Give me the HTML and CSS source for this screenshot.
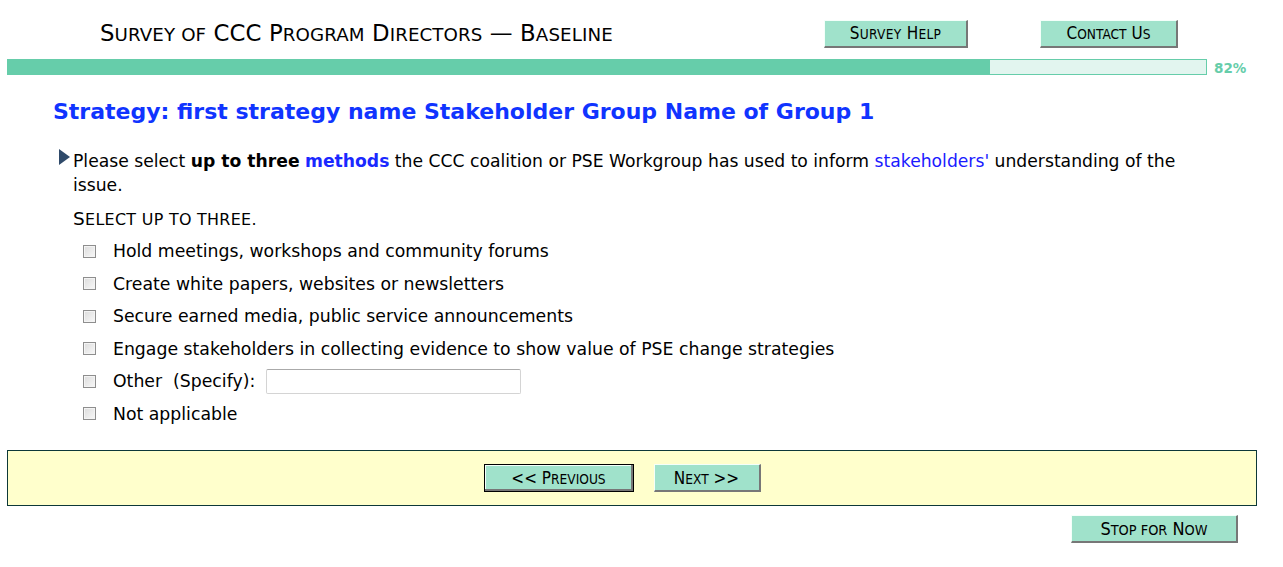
FILE: index.html
```html
<!DOCTYPE html>
<html lang="en">
<head>
    <meta charset="UTF-8">
    <title>Survey of CCC Program Directors - Baseline</title>
    <link rel="stylesheet" href="styles.css">
</head>
<body>
    <div class="header">
        <div class="survey-title">S<span class="sc">urvey of</span> CCC P<span class="sc">rogram</span> D<span class="sc">irectors</span> &mdash; B<span class="sc">aseline</span></div>
        <div class="header-buttons">
            <button class="btn btn-help">S<span class="sc">urvey</span> H<span class="sc">elp</span></button>
            <button class="btn btn-contact">C<span class="sc">ontact</span> U<span class="sc">s</span></button>
        </div>
    </div>

    <div class="progress-row">
        <div class="progress"><div class="progress-fill" style="width: 82%"></div></div>
        <span class="progress-text">82%</span>
    </div>

    <h1 class="page-title">Strategy: first strategy name Stakeholder Group Name of Group 1</h1>

    <div class="question">
        <span class="arrow"></span>
        <div class="question-text">Please select <b>up to three</b> <b class="blue">methods</b> the CCC coalition or PSE Workgroup has used to inform <span class="blue">stakeholders'</span> understanding of the issue.</div>
    </div>

    <div class="instruction">S<span class="sc">elect up to three.</span></div>

    <ul class="choices">
        <li><input type="checkbox" id="c1"><label for="c1">Hold meetings, workshops and community forums</label></li>
        <li><input type="checkbox" id="c2"><label for="c2">Create white papers, websites or newsletters</label></li>
        <li><input type="checkbox" id="c3"><label for="c3">Secure earned media, public service announcements</label></li>
        <li><input type="checkbox" id="c4"><label for="c4">Engage stakeholders in collecting evidence to show value of PSE change strategies</label></li>
        <li><input type="checkbox" id="c5"><label for="c5">Other&nbsp; (Specify):</label> <input type="text" class="other-text"></li>
        <li><input type="checkbox" id="c6"><label for="c6">Not applicable</label></li>
    </ul>

    <div class="nav-box">
        <button class="btn btn-prev">&lt;&lt; P<span class="sc">revious</span></button>
        <button class="btn btn-next">N<span class="sc">ext</span> &gt;&gt;</button>
    </div>

    <div class="stop-row">
        <button class="btn btn-stop">S<span class="sc">top for</span> N<span class="sc">ow</span></button>
    </div>
</body>
</html>
```

FILE: styles.css
```css
body { margin: 0; padding: 0 7px; background: #fff; color: #000; font-family: "DejaVu Sans", Verdana, sans-serif; }
.sc { font-size: 0.8em; text-transform: uppercase; }

.header { display: flex; align-items: center; height: 59px; padding-left: 93px; padding-right: 98px; }
.survey-title { font-family: "DejaVu Sans", Tahoma, sans-serif; font-size: 22.8px; letter-spacing: 0.1px; margin-top: 7px; }
.header-buttons { display: flex; gap: 72px; margin-left: auto; margin-top: 8px; }

.btn { font-family: "DejaVu Sans Condensed", Tahoma, sans-serif; font-size: 17px; color: #000; background: #a0e2cb; height: 28px; padding: 0; border-style: solid; border-color: #f4fffa #777 #777 #f4fffa; border-width: 1px 2px 2px 1px; cursor: pointer; }
.btn-help { width: 144px; letter-spacing: 0.3px; }
.btn-contact { width: 138px; }

.progress-row { display: flex; align-items: center; height: 16px; }
.progress { width: 1200px; height: 16px; box-sizing: border-box; border: 1px solid #66cdaa; background: #e2f5ef; }
.progress-fill { height: 100%; background: #66cdaa; }
.progress-text { margin-left: 7px; font-size: 13.5px; font-weight: bold; color: #66cdaa; padding-top: 2px; }

.page-title { margin: 24px 0 0 46px; font-size: 22px; font-weight: bold; color: #1034ff; }

.question { display: flex; align-items: flex-start; margin: 25px 0 0 52px; width: 1140px; }
.arrow { flex: none; width: 0; height: 0; margin: 0 3px 0 0; border-left: 11px solid #2f4a6a; border-top: 8px solid transparent; border-bottom: 8px solid transparent; }
.question-text { font-size: 17.2px; line-height: 24px; }
.blue { color: #1a1aff; }
b.blue { color: #1a28ff; }

.instruction { margin: 11px 0 0 66px; font-size: 18.5px; letter-spacing: 0.3px; }
.instruction .sc { font-size: 0.86em; }

.choices { list-style: none; margin: 6px 0 0 0; padding: 0 0 0 76px; }
.choices li { display: flex; align-items: center; height: 32.5px; font-size: 17.3px; }
.choices input[type="checkbox"] { appearance: none; -webkit-appearance: none; width: 13px; height: 13px; margin: 0 17px 0 0; border: 1px solid #8e8e8e; background: linear-gradient(135deg, #dcdcdc, #f8f8f8); box-shadow: inset 0 0 0 1px #f4f4f4; box-sizing: border-box; }
.other-text { width: 255px; height: 25px; box-sizing: border-box; margin-left: 11px; border: 1px solid #d4d4d4; border-top-color: #aaa; border-radius: 2px; }

.nav-box { margin-top: 20px; width: 1250px; box-sizing: border-box; height: 56px; border: 1px solid #0d3838; background: #ffffcc; display: flex; justify-content: center; align-items: center; gap: 20px; padding-right: 20px; }
.btn-prev { width: 150px; border: 1px solid #000; box-shadow: inset -2px -2px 0 #777, inset 1px 1px 0 #f4fffa; }
.btn-next { width: 107px; }

.stop-row { display: flex; justify-content: flex-end; width: 1250px; padding-right: 19px; box-sizing: border-box; margin-top: 9px; }
.btn-stop { width: 167px; font-size: 18px; }
```
